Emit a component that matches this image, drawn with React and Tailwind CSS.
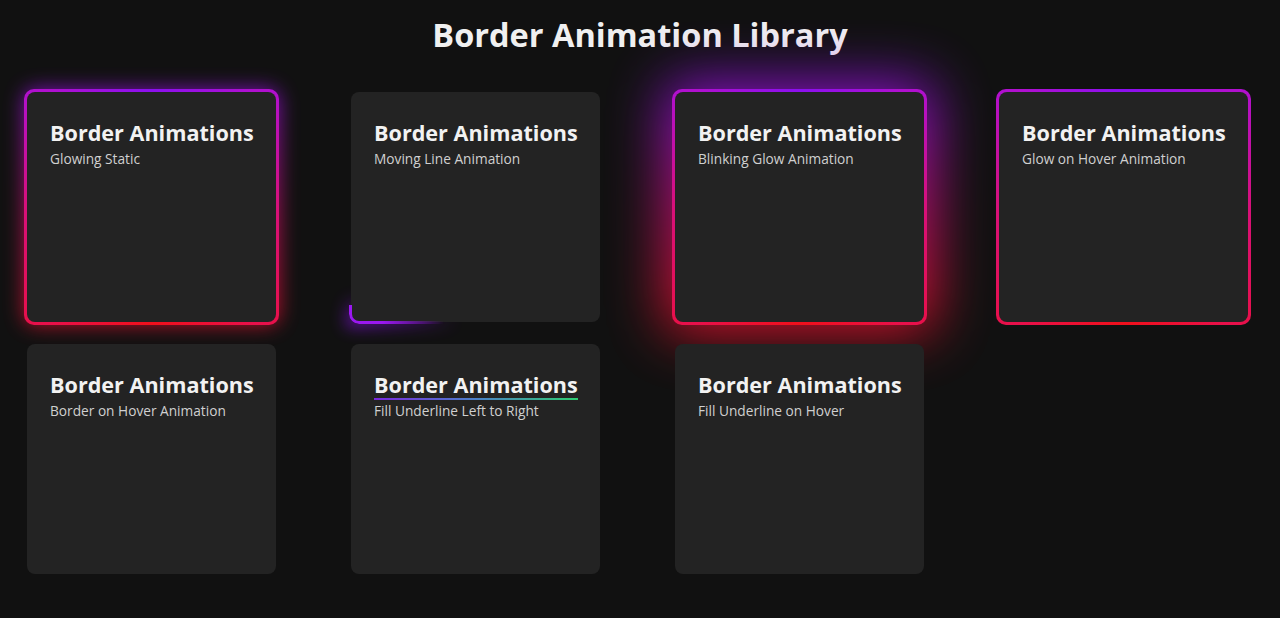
import React from 'react';

const font = { fontFamily: '"Open Sans", "Noto Sans", sans-serif' };

// gradient frame used by the glowing cards
function Frame({ glow }) {
  return (
    <>
      {glow === 'soft' && (
        <div className="absolute -inset-[3px] -z-10 rounded-[11px] bg-[linear-gradient(to_bottom,#9b10f0,#e0106e_55%,#f0102e)] blur-[10px] opacity-75"></div>
      )}
      {glow === 'strong' && (
        <div className="absolute -inset-[10px] -z-10 rounded-[16px] bg-[linear-gradient(to_bottom,#8a10f0,#d0107a_50%,#f0101e)] blur-[28px] opacity-90"></div>
      )}
      <div className="absolute -inset-[3px] -z-10 rounded-[10px] bg-[radial-gradient(ellipse_40%_12%_at_50%_0%,#8a10f0,transparent),radial-gradient(ellipse_40%_12%_at_50%_100%,#f0101a,transparent),linear-gradient(to_bottom,#b010d0,#d8107a_50%,#e8104a)]"></div>
    </>
  );
}

function Card({ sub, glow, frame, line, underline }) {
  return (
    <div className="relative isolate h-[230px] w-[249px]">
      {frame && <Frame glow={glow} />}
      {line && (
        <>
          <div className="absolute -bottom-[5px] -left-[5px] -z-10 h-[32px] w-[115px] bg-[radial-gradient(ellipse_at_0%_100%,#7a10d0,transparent_70%)] blur-[8px] opacity-90"></div>
          <div className="absolute -bottom-[2px] -left-[2px] h-[19px] w-[95px] rounded-bl-[10px] border-b-[3px] border-l-[3px] border-[#9a18f0] [mask-image:linear-gradient(to_right,black_35%,transparent)]"></div>
        </>
      )}
      <div className="h-full w-full rounded-lg bg-[#232323] px-[23px] pt-[24px]">
        <h2 className="inline-block whitespace-nowrap text-[21.6px] font-bold leading-[34px] text-[#f2f2f2]">
          Border Animations
          {underline && (
            <span className="-mt-[4px] block h-[2px] w-full bg-[linear-gradient(to_right,#7a28e0,#4a80c8,#2ecc71)]"></span>
          )}
        </h2>
        <p className={`${underline ? 'mt-[2px]' : 'mt-0'} text-[13.7px] leading-[18px] text-[#d0d0d0]`}>{sub}</p>
      </div>
    </div>
  );
}

export default function App() {
  return (
    <div className="min-h-[618px] bg-[#111111]" style={font}>
      <h1 className="pt-[12px] text-center text-[32.5px] font-bold leading-[46px] text-[#f0f0f0]">
        Border Animation Library
      </h1>
      <div className="mt-[34px] grid grid-cols-[repeat(4,249px)] gap-x-[75px] gap-y-[22px] pl-[27px]">
        <Card sub="Glowing Static" frame glow="soft" />
        <Card sub="Moving Line Animation" line />
        <Card sub="Blinking Glow Animation" frame glow="strong" />
        <Card sub="Glow on Hover Animation" frame />
        <Card sub="Border on Hover Animation" />
        <Card sub="Fill Underline Left to Right" underline />
        <Card sub="Fill Underline on Hover" />
      </div>
    </div>
  );
}
